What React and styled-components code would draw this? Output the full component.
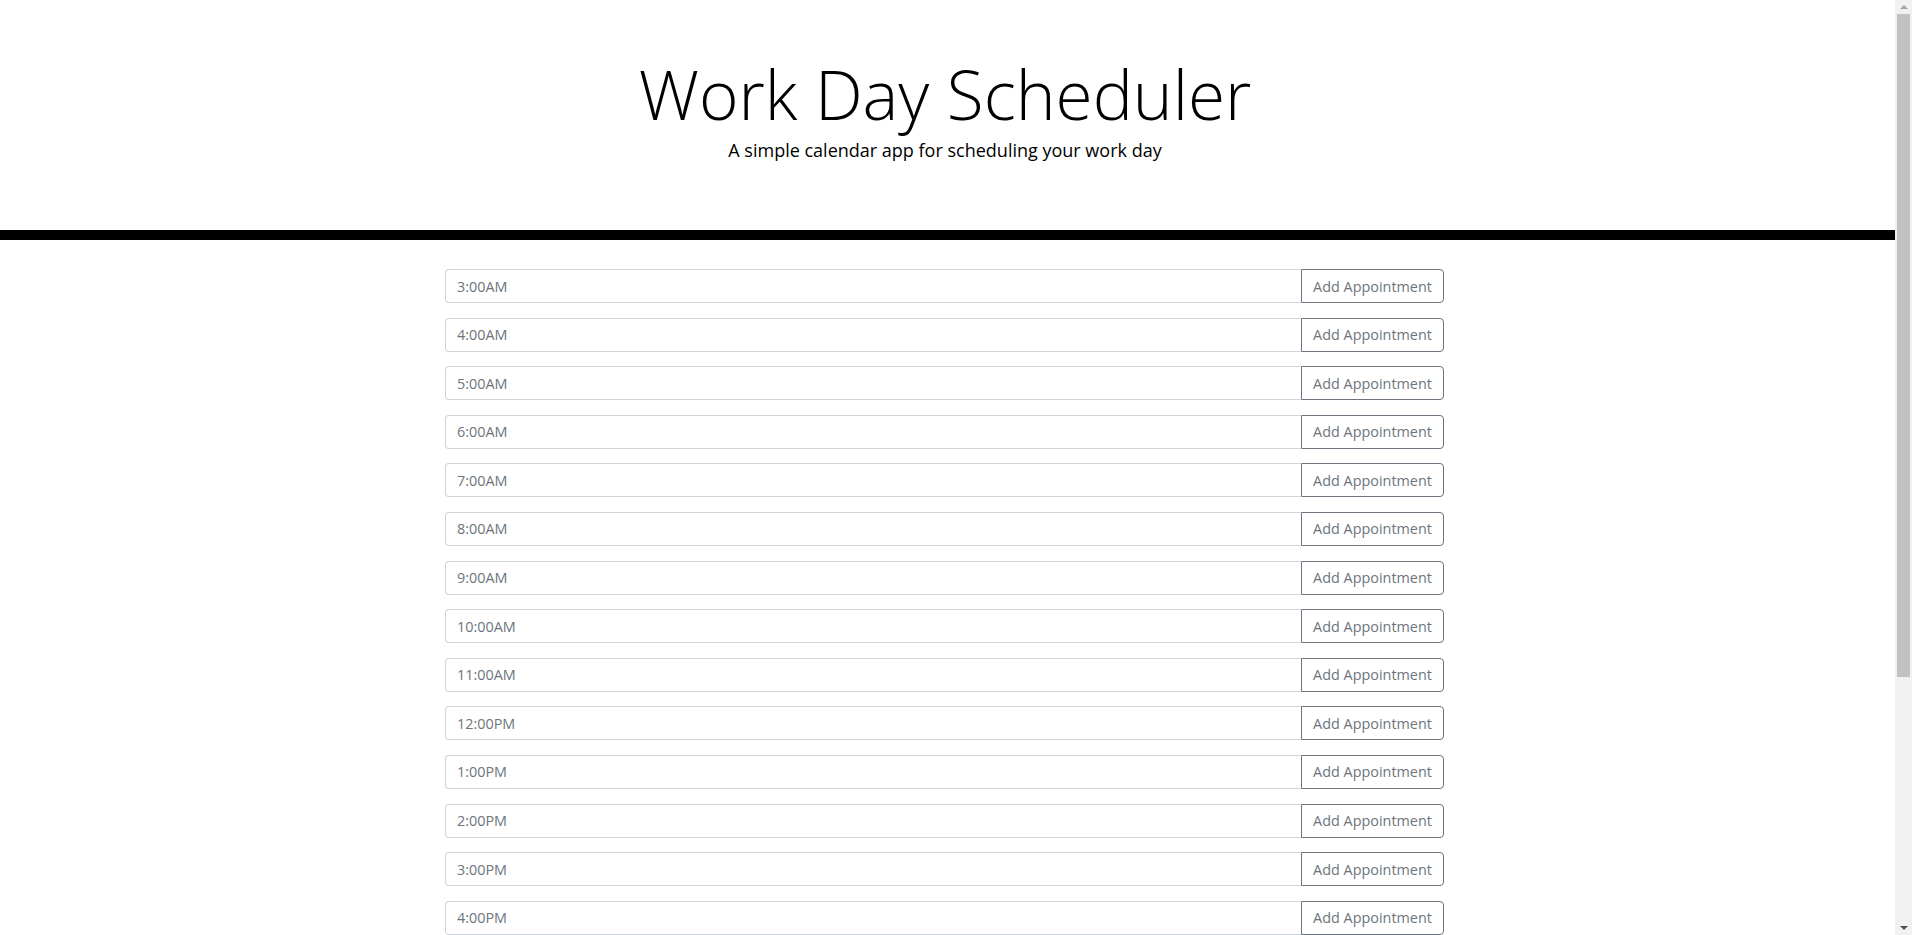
import React from 'react';
import styled, { createGlobalStyle } from 'styled-components';

const GlobalStyle = createGlobalStyle`
  body {
    margin: 0 15px 0 0;
    font-family: "Open Sans", "Liberation Sans", sans-serif;
    color: #212529;
    background: #fff;
  }
  * { box-sizing: border-box; }
`;

// fake browser scrollbar, drawn over the right edge
const Scrollbar = styled.div`
  position: fixed;
  top: 0;
  right: 0;
  width: 17px;
  height: 100vh;
  background: #f1f1f1;
  display: flex;
  flex-direction: column;
  align-items: center;
`;

const Arrow = styled.div`
  width: 0;
  height: 0;
  margin: 5px 0;
  border-left: 4px solid transparent;
  border-right: 4px solid transparent;
  ${(p) => (p.$down ? 'border-top: 4px solid #505050;' : 'border-bottom: 4px solid #a3a3a3;')}
`;

const Thumb = styled.div`
  width: 13px;
  height: 663px;
  background: #c1c1c1;
`;

const Track = styled.div`
  flex: 1;
`;

const Page = styled.div`
  padding-bottom: 24px;
`;

const Header = styled.header`
  text-align: center;
  padding: 54px 32px 66px;
  border-bottom: 10px solid #000;
  margin-bottom: 29px;
`;

const HeaderInner = styled.div`
  padding-right: 7px;
`;

const Title = styled.h1`
  margin: 0;
  font-size: 67.5px;
  font-weight: 300;
  line-height: 1.2;
  color: #000;
`;

const Lead = styled.p`
  margin: 2px 0 0;
  font-size: 18px;
  font-weight: 400;
  line-height: 1.5;
  color: #000;
`;

const Container = styled.main`
  width: 999px;
  margin: 0 auto;
  position: relative;
  left: -4px;
  display: flex;
  flex-direction: column;
  gap: 14.6px;
`;

const Row = styled.div`
  display: flex;
  height: 34px;
`;

const TimeInput = styled.input`
  flex: 1;
  min-width: 0;
  height: 100%;
  padding: 0 11px;
  font-family: inherit;
  font-size: 14.4px;
  color: #495057;
  border: 1px solid #ced4da;
  border-right: none;
  border-radius: 4px 0 0 4px;
  outline: none;

  &::placeholder {
    color: #6c757d;
  }
`;

const AddButton = styled.button`
  width: 143px;
  height: 100%;
  padding: 0;
  font-family: inherit;
  font-size: 14.4px;
  color: #6c757d;
  background: transparent;
  border: 1px solid #6c757d;
  border-radius: 0 4px 4px 0;
  cursor: pointer;
`;

const hours = [];
for (let h = 3; h <= 22; h++) {
  const suffix = h < 12 ? 'AM' : 'PM';
  const hr = h % 12 === 0 ? 12 : h % 12;
  hours.push(`${hr}:00${suffix}`);
}

export default function App() {
  return (
    <Page>
      <GlobalStyle />
      <Header>
        <HeaderInner>
          <Title>Work Day Scheduler</Title>
          <Lead>A simple calendar app for scheduling your work day</Lead>
        </HeaderInner>
      </Header>
      <Container>
        {hours.map((label) => (
          <Row key={label}>
            <TimeInput placeholder={label} />
            <AddButton>Add Appointment</AddButton>
          </Row>
        ))}
      </Container>
      <Scrollbar>
        <Arrow />
        <Thumb />
        <Track />
        <Arrow $down />
      </Scrollbar>
    </Page>
  );
}
